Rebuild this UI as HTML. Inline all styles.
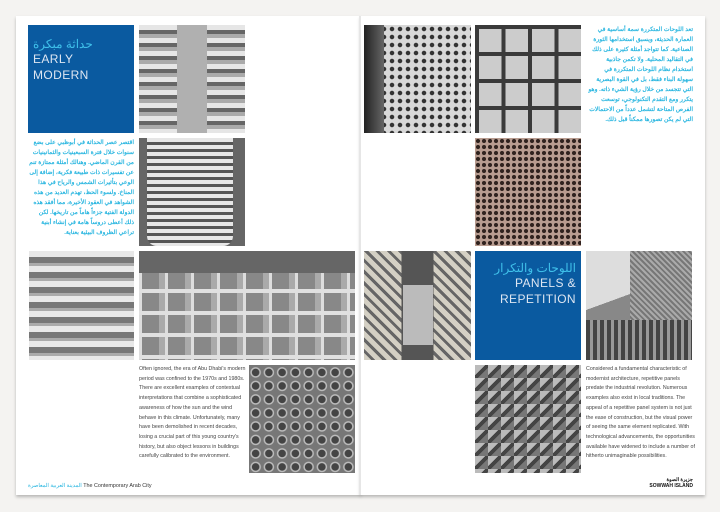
<!DOCTYPE html>
<html><head><meta charset="utf-8"><style>
*{margin:0;padding:0;box-sizing:border-box}
body{width:720px;height:512px;background:#f4f3f1;position:relative;overflow:hidden;font-family:"Liberation Sans",sans-serif}
.page{position:absolute;top:16px;height:479px;background:#fff;box-shadow:0 2px 3px rgba(0,0,0,.25)}
.a{position:absolute}
.blue{background:#0a5aa0;color:#fff}
.ar{font-family:"Liberation Sans","Noto Sans CJK SC",sans-serif;direction:rtl;color:#29b6e0;font-size:6px;line-height:10px;text-align:right;font-weight:bold}
.en{font-size:5.3px;line-height:9.7px;color:#444}
.title{font-size:12px;line-height:16px;letter-spacing:.4px;color:#dde6f2}
.art{color:#3fc0ea;font-size:12px;line-height:14px}
</style></head><body>
<div class="page" style="left:16px;width:345px"></div>
<div class="page" style="left:360px;width:345px"></div>
<div class="a" style="left:359px;top:16px;width:2px;height:479px;background:#e6e6e6"></div>

<!-- left page -->
<div class="a blue" style="left:28px;top:25px;width:106px;height:108px;padding:12px 0 0 5px">
<div class="art" style="text-align:left;direction:rtl;width:62px">حداثة مبكرة</div>
<div class="title">EARLY<br>MODERN</div></div>
<div class="a" style="left:139px;top:25px;width:106px;height:108px;background:repeating-linear-gradient(180deg,#e6e6e6 0 5px,#666 5px 9px,#aaa 9px 13px),#888"></div>
<div class="a" style="left:177px;top:25px;width:30px;height:108px;background:#b0b0b0"></div>
<div class="a" style="left:139px;top:138px;width:106px;height:108px;background:#666"></div>
<div class="a" style="left:147px;top:138px;width:86px;height:108px;background:repeating-linear-gradient(180deg,#e6e6e6 0 4px,#555 4px 7px),#bbb;border-radius:0 0 10px 10px"></div>
<div class="a ar" style="left:28px;top:138px;width:106px">اقتصر عصر الحداثة في أبوظبي على بضع سنوات خلال فترة السبعينيات والثمانينيات من القرن الماضي. وهنالك أمثلة ممتازة تنم عن تفسيرات ذات طبيعة فكرية، إضافة إلى الوعي بتأثيرات الشمس والرياح في هذا المناخ. ولسوء الحظ، تهدم العديد من هذه الشواهد في العقود الأخيرة، مما أفقد هذه الدولة الفتية جزءاً هاماً من تاريخها. لكن ذلك أعطى دروساً هامة في إنشاء أبنية تراعي الظروف البيئية بعناية.</div>

<div class="a" style="left:29px;top:251px;width:105px;height:109px;background:repeating-linear-gradient(180deg,#e8e8e8 0 6px,#777 6px 12px,#aaa 12px 15px)"></div>
<div class="a" style="left:139px;top:251px;width:216px;height:109px;background:linear-gradient(180deg,#666 0 20%,transparent 20%),repeating-linear-gradient(90deg,#ddd 0 3px,#888 3px 20px,#aaa 20px 26px),#888"></div>
<div class="a" style="left:139px;top:271px;width:216px;height:89px;background:repeating-linear-gradient(180deg,transparent 0 18px,#e0e0e0 18px 22px)"></div>
<div class="a en" style="left:139px;top:365px;width:108px">Often ignored, the era of Abu Dhabi's modern period was confined to the 1970s and 1980s. There are excellent examples of contextual interpretations that combine a sophisticated awareness of how the sun and the wind behave in this climate. Unfortunately, many have been demolished in recent decades, losing a crucial part of this young country's history, but also object lessons in buildings carefully calibrated to the environment.</div>
<div class="a" style="left:249px;top:365px;width:106px;height:108px;background:radial-gradient(circle at 50% 55%,#444 0 3.5px,#bbb 4px 5px,#777 5.5px) 0 0/13.25px 13.5px"></div>
<div class="a" style="left:28px;top:483px;font-size:5.4px;color:#333;white-space:nowrap"><span style="color:#29b6e0">المدينة العربية المعاصرة</span> The Contemporary Arab City</div>

<!-- right page -->
<div class="a" style="left:364px;top:25px;width:107px;height:108px;background:radial-gradient(circle,#333 0 2px,#d8d8d8 2.5px) 0 0/8px 8px"></div>
<div class="a" style="left:364px;top:25px;width:20px;height:108px;background:linear-gradient(90deg,#222,#666)"></div>
<div class="a" style="left:475px;top:25px;width:106px;height:108px;background:linear-gradient(90deg,#3a3a3a 0 4px,transparent 4px) 0 0/26.5px 27px,linear-gradient(180deg,#3a3a3a 0 4px,transparent 4px) 0 0/26.5px 27px,#ccc"></div>
<div class="a ar" style="left:587px;top:25px;width:106px">تعد اللوحات المتكررة سمة أساسية في العمارة الحديثة، ويسبق استخدامها الثورة الصناعية. كما تتواجد أمثلة كثيرة على ذلك في التقاليد المحلية. ولا تكمن جاذبية استخدام نظام اللوحات المتكررة في سهولة البناء فقط، بل في القوة البصرية التي تتجسد من خلال رؤية الشيء ذاته. وهو يتكرر ومع التقدم التكنولوجي، توسعت الفرص المتاحة لتشمل عدداً من الاحتمالات التي لم يكن تصورها ممكناً قبل ذلك.</div>
<div class="a" style="left:475px;top:138px;width:106px;height:108px;background:radial-gradient(circle,#2f221e 0 1.8px,#b89c90 2.3px) 0 0/6px 6px"></div>

<div class="a" style="left:364px;top:251px;width:107px;height:109px;background:linear-gradient(90deg,transparent 35%,#555 35% 65%,transparent 65%),repeating-linear-gradient(45deg,#d4d0c4 0 5px,#666 5px 8px)"></div>
<div class="a" style="left:403px;top:285px;width:30px;height:60px;background:#bbb"></div>
<div class="a blue" style="left:475px;top:251px;width:106px;height:109px;padding:10px 5px 0 0;text-align:right">
<div class="art" style="direction:rtl">اللوحات والتكرار</div>
<div class="title">PANELS &amp;<br>REPETITION</div></div>
<div class="a" style="left:586px;top:251px;width:106px;height:109px;background:linear-gradient(160deg,#ddd 0 40%,#888 40%)"></div>
<div class="a" style="left:630px;top:251px;width:62px;height:70px;background:repeating-linear-gradient(45deg,#aaa 0 2px,#777 2px 4px)"></div>
<div class="a" style="left:586px;top:320px;width:106px;height:40px;background:repeating-linear-gradient(90deg,#444 0 4px,#999 4px 7px)"></div>
<div class="a" style="left:475px;top:365px;width:106px;height:108px;background:linear-gradient(135deg,#bbb 0 40%,#444 40% 60%,#777 60%) 0 0/13px 13px"></div>
<div class="a en" style="left:586px;top:365px;width:110px">Considered a fundamental characteristic of modernist architecture, repetitive panels predate the industrial revolution. Numerous examples also exist in local traditions. The appeal of a repetitive panel system is not just the ease of construction, but the visual power of seeing the same element replicated. With technological advancements, the opportunities available have widened to include a number of hitherto unimaginable possibilities.</div>
<div class="a" style="left:630px;top:478px;width:63px;text-align:right;font-size:5px;line-height:5.5px;color:#111;font-weight:bold;white-space:nowrap"><div style="direction:rtl;font-family:'Liberation Sans','Noto Sans CJK SC',sans-serif">جزيرة الصوة</div>SOWWAH ISLAND</div>
</body></html>
